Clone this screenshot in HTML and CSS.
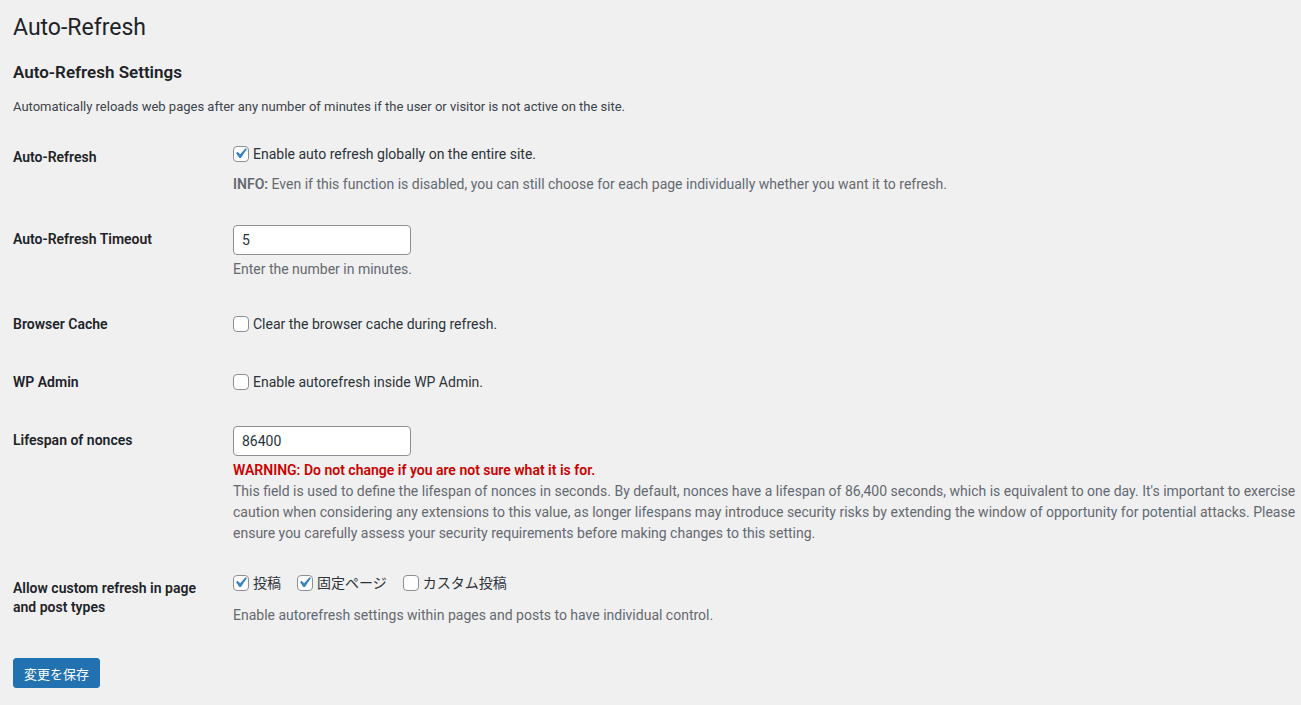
FILE: index.html
```html
<!DOCTYPE html>
<html lang="ja">
<head>
    <meta charset="UTF-8">
    <meta name="viewport" content="width=device-width, initial-scale=1.0">
    <title>Auto-Refresh</title>
    <link rel="stylesheet" href="styles.css">
</head>
<body>
    <div class="wrap">
        <h1>Auto-Refresh</h1>

        <form>
            <h2>Auto-Refresh Settings</h2>
            <p class="intro">Automatically reloads web pages after any number of minutes if the user or visitor is not active on the site.</p>

            <table class="form-table">
                <tr>
                    <th>Auto-Refresh</th>
                    <td>
                        <label class="check">
                            <span class="cb checked"><svg viewBox="0 0 20 20"><path d="M14.83 4.89l1.34.94-5.81 8.38H9.02L5.78 9.67l1.34-1.25 2.57 2.4z"/></svg></span>
                            Enable auto refresh globally on the entire site.
                        </label>
                        <p class="description info"><strong>INFO:</strong> Even if this function is disabled, you can still choose for each page individually whether you want it to refresh.</p>
                    </td>
                </tr>
                <tr>
                    <th>Auto-Refresh Timeout</th>
                    <td>
                        <input type="text" class="small-input" value="5">
                        <p class="description">Enter the number in minutes.</p>
                    </td>
                </tr>
                <tr>
                    <th>Browser Cache</th>
                    <td>
                        <label class="check single">
                            <span class="cb"></span>
                            Clear the browser cache during refresh.
                        </label>
                    </td>
                </tr>
                <tr>
                    <th>WP Admin</th>
                    <td>
                        <label class="check single">
                            <span class="cb"></span>
                            Enable autorefresh inside WP Admin.
                        </label>
                    </td>
                </tr>
                <tr>
                    <th>Lifespan of nonces</th>
                    <td>
                        <input type="text" class="small-input" value="86400">
                        <p class="description"><span class="warning">WARNING: Do not change if you are not sure what it is for.</span><br>This field is used to define the lifespan of nonces in seconds. By default, nonces have a lifespan of 86,400 seconds, which is equivalent to one day. It's important to exercise caution when considering any extensions to this value, as longer lifespans may introduce security risks by extending the window of opportunity for potential attacks. Please ensure you carefully assess your security requirements before making changes to this setting.</p>
                    </td>
                </tr>
                <tr>
                    <th>Allow custom refresh in page and post types</th>
                    <td>
                        <div class="check-list">
                            <label class="check">
                                <span class="cb checked"><svg viewBox="0 0 20 20"><path d="M14.83 4.89l1.34.94-5.81 8.38H9.02L5.78 9.67l1.34-1.25 2.57 2.4z"/></svg></span>
                                投稿
                            </label>
                            <label class="check">
                                <span class="cb checked"><svg viewBox="0 0 20 20"><path d="M14.83 4.89l1.34.94-5.81 8.38H9.02L5.78 9.67l1.34-1.25 2.57 2.4z"/></svg></span>
                                固定ページ
                            </label>
                            <label class="check">
                                <span class="cb"></span>
                                カスタム投稿
                            </label>
                        </div>
                        <p class="description list-info">Enable autorefresh settings within pages and posts to have individual control.</p>
                    </td>
                </tr>
            </table>

            <p class="submit">
                <button type="button" class="button-primary">変更を保存</button>
            </p>
        </form>
    </div>
</body>
</html>
```

FILE: styles.css
```css
body {
    margin: 0;
    background: #f0f0f1;
    color: #3c434a;
    font-family: "Segoe UI", Roboto, "Noto Sans CJK JP", sans-serif;
    font-size: 13px;
    line-height: 1.4;
}
.wrap {
    padding: 1px 0 1px 13px;
}
h1 {
    margin: 0;
    padding: 12px 0 4px;
    font-size: 23px;
    font-weight: 400;
    line-height: 1.3;
    color: #1d2327;
}
h2 {
    margin: 14px 0 14px;
    font-size: 17px;
    font-weight: 600;
    line-height: 22px;
    color: #1d2327;
}
.intro {
    margin: 0;
    line-height: 20px;
}
.form-table {
    border-collapse: collapse;
    margin-top: 11px;
    width: 100%;
}
.form-table th {
    width: 200px;
    padding: 20px 10px 20px 0;
    text-align: left;
    vertical-align: top;
    font-size: 14px;
    font-weight: 600;
    line-height: 1.3;
    color: #1d2327;
}
.form-table td {
    padding: 15px 4px 15px 10px;
    vertical-align: top;
    font-size: 14px;
    line-height: 1.3;
}
.check {
    display: inline-flex;
    align-items: center;
    gap: 4px;
    color: #2c3338;
    line-height: 22px;
}
.check.single {
    padding-top: 3px;
}
.check-list {
    display: flex;
    gap: 16px;
    margin-top: -2px;
}
.cb {
    box-sizing: border-box;
    width: 16px;
    height: 16px;
    border: 1px solid #8c8f94;
    border-radius: 4px;
    background: #fff;
    position: relative;
    flex: none;
}
.cb svg {
    position: absolute;
    left: -4px;
    top: -4px;
    width: 21px;
    height: 21px;
    fill: #3582c4;
}
.description {
    margin: 4px 0 0;
    color: #646970;
    font-size: 14px;
    line-height: 21px;
}
.description.info {
    margin-top: 8px;
}
.description.list-info {
    margin-top: 11px;
}
.description strong {
    font-weight: 600;
}
.warning {
    color: #cc0000;
    font-weight: 600;
}
.small-input {
    box-sizing: border-box;
    width: 178px;
    height: 30px;
    padding: 0 8px;
    border: 1px solid #8c8f94;
    border-radius: 4px;
    background: #fff;
    color: #2c3338;
    font-family: inherit;
    font-size: 14px;
    margin: 0;
    display: block;
}
.submit {
    margin: 17px 0 0;
}
.button-primary {
    height: 30px;
    padding: 0 10px;
    border: 1px solid #2271b1;
    border-radius: 3px;
    background: #2271b1;
    color: #fff;
    font-family: inherit;
    font-size: 13px;
    cursor: pointer;
}
```
